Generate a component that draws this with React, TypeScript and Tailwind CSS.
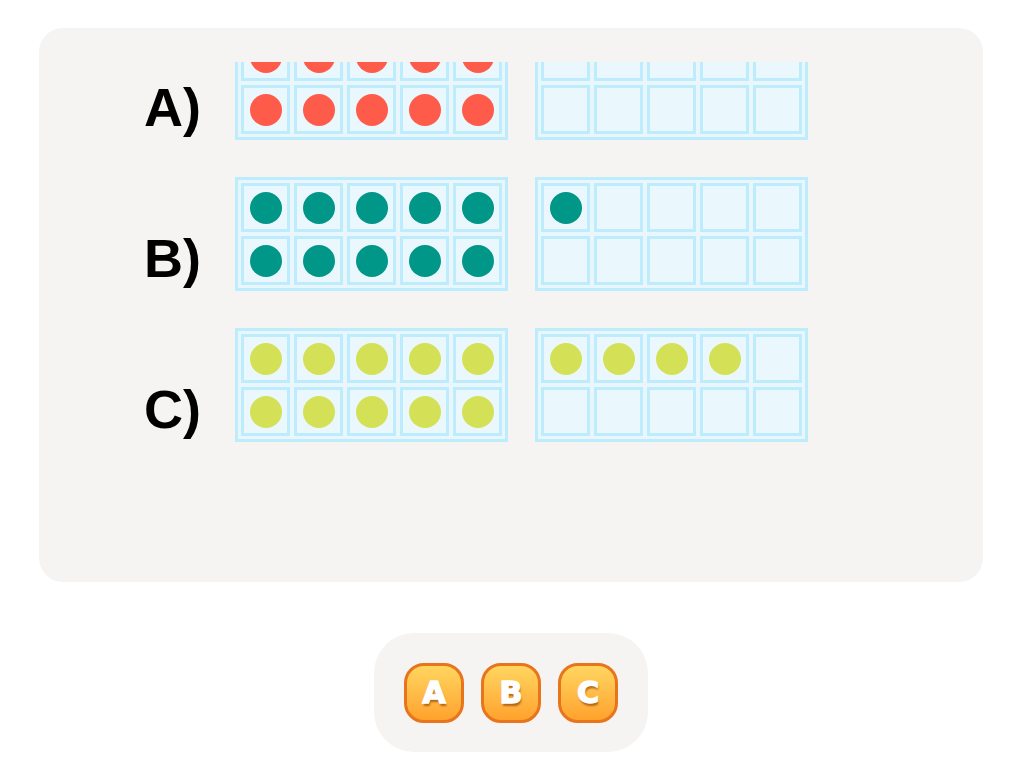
import React from 'react';

type Row = { label: string; color: string; count: number };

const rows: Row[] = [
  { label: 'A)', color: 'bg-[#ff5b4b]', count: 10 },
  { label: 'B)', color: 'bg-[#009688]', count: 11 },
  { label: 'C)', color: 'bg-[#d4e157]', count: 14 },
];

const TenFrame: React.FC<{ filled: number; color: string }> = ({ filled, color }) => (
  <div className="grid grid-cols-5 gap-[4px] p-[3px] border-[3px] border-[#bdecfd] bg-[#e9f7fd]">
    {Array.from({ length: 10 }).map((_, i) => (
      <div
        key={i}
        className="w-[49px] h-[49px] border-[3px] border-[#bdecfd] bg-[#eaf7fc] flex items-center justify-center"
      >
        {i < filled && <div className={`w-[32px] h-[32px] rounded-full ${color}`} />}
      </div>
    ))}
  </div>
);

const AnswerButton: React.FC<{ letter: string }> = ({ letter }) => (
  <button
    className="w-[60px] h-[60px] rounded-[20px] border-[3px] border-[#e8741c] bg-gradient-to-b from-[#ffd65f] to-[#ffa22c] flex items-center justify-center text-white text-[30px] font-black leading-none [-webkit-text-stroke:1.5px_white] [text-shadow:1px_3px_2px_rgba(130,50,0,0.6)]"
    style={{ fontFamily: '"DejaVu Sans", sans-serif' }}
  >
    {letter}
  </button>
);

export default function App() {
  return (
    <div className="w-full min-h-screen bg-white flex flex-col items-center pt-[28px]">
      <div className="w-[944px] h-[554px] rounded-3xl bg-[#f5f4f2] pt-[34px] pb-[34px]">
        <div className="h-full overflow-hidden">
          <div className="-mt-[36px] flex flex-col gap-[37px] pl-[105px]">
            {rows.map(row => (
              <div key={row.label} className="flex items-start">
                <div
                  className="w-[91px] mt-[54px] text-[54px] leading-none font-bold text-black"
                  style={{ fontFamily: '"Liberation Sans", Arial, sans-serif' }}
                >
                  {row.label}
                </div>
                <div className="flex gap-[27px]">
                  <TenFrame filled={Math.min(row.count, 10)} color={row.color} />
                  <TenFrame filled={Math.max(row.count - 10, 0)} color={row.color} />
                </div>
              </div>
            ))}
          </div>
        </div>
      </div>

      <div className="mt-[51px] w-[274px] h-[119px] rounded-[40px] bg-[#f5f4f2] flex items-center justify-center gap-[17px]">
        <AnswerButton letter="A" />
        <AnswerButton letter="B" />
        <AnswerButton letter="C" />
      </div>
    </div>
  );
}
